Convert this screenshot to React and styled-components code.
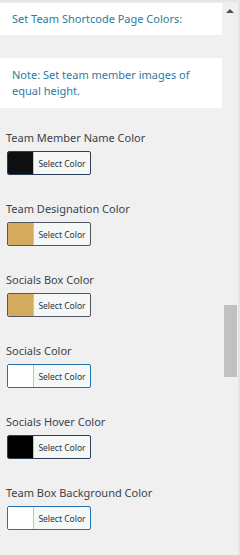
import React from "react";
import styled, { createGlobalStyle } from "styled-components";

const Global = createGlobalStyle`
  html, body {
    margin: 0;
    padding: 0;
    background: #f0f0f1;
  }
  body {
    font-family: "Noto Sans", "Open Sans", sans-serif;
  }
`

const Frame = styled.div`
  display: flex;
  width: 240px;
  height: 555px;
  overflow: hidden;
  border-top: 2px solid #e6e6e6;
  box-sizing: border-box;
  background: #f0f0f1;
`

const Content = styled.div`
  width: 222px;
  display: flex;
  flex-direction: column;
  padding-top: 1px;
`

const Notice = styled.div`
  background: #fff;
  color: #2c7aa3;
  font-size: 11px;
  line-height: 16px;
  padding: ${props => props.pad || "8px 12px"};
  margin-bottom: ${props => props.gap || "0"};
`

const Field = styled.div`
  display: flex;
  flex-direction: column;
  padding-left: 6px;
  margin-bottom: 27px;
`

const Label = styled.div`
  color: #3c434a;
  font-size: 11px;
  line-height: 14px;
  margin-bottom: 6px;
`

const ColorButton = styled.button`
  display: flex;
  align-items: stretch;
  width: 84px;
  height: 24px;
  padding: 0;
  margin: 0 0 0 1px;
  border: 1px solid ${props => props.border || "#2271b1"};
  border-radius: 2px;
  background: #f6f7f7;
  overflow: hidden;
  cursor: pointer;
`

const Swatch = styled.span`
  width: 25px;
  background: ${props => props.color};
  border-right: 1px solid #c3c4c7;
`

const ButtonText = styled.span`
  flex: 1;
  display: flex;
  align-items: center;
  justify-content: center;
  font-family: "Noto Sans", "Open Sans", sans-serif;
  font-size: 8.5px;
  color: #2c3338;
`

const Scrollbar = styled.div`
  width: 18px;
  display: flex;
  flex-direction: column;
  align-items: center;
  border-right: 2px solid #e4e4e4;
  box-sizing: border-box;
`

const Arrow = styled.div`
  margin-top: 7px;
  width: 0;
  height: 0;
  border-left: 4px solid transparent;
  border-right: 4px solid transparent;
  border-bottom: 4px solid #505050;
`

const Thumb = styled.div`
  margin-top: 292px;
  width: 13px;
  height: 72px;
  background: #c1c1c1;
`

const fields = [
  { label: "Team Member Name Color", color: "#0e0f10", border: "#2c3f56" },
  { label: "Team Designation Color", color: "#d4aa5f", border: "#50575e" },
  { label: "Socials Box Color", color: "#d4aa5f", border: "#50575e" },
  { label: "Socials Color", color: "#ffffff", border: "#2271b1" },
  { label: "Socials Hover Color", color: "#000000", border: "#2c3f56" },
  { label: "Team Box Background Color", color: "#ffffff", border: "#2271b1" },
]

export default function App() {
  return (
    <>
      <Global />
      <Frame>
        <Content>
          <Notice pad="8px 12px" gap="23px">Set Team Shortcode Page Colors:</Notice>
          <Notice pad="9px 12px 9px 12px" gap="23px">
            Note: Set team member images of equal height.
          </Notice>
          {fields.map(f => (
            <Field key={f.label}>
              <Label>{f.label}</Label>
              <ColorButton border={f.border}>
                <Swatch color={f.color} />
                <ButtonText>Select Color</ButtonText>
              </ColorButton>
            </Field>
          ))}
        </Content>
        <Scrollbar>
          <Arrow />
          <Thumb />
        </Scrollbar>
      </Frame>
    </>
  );
}
